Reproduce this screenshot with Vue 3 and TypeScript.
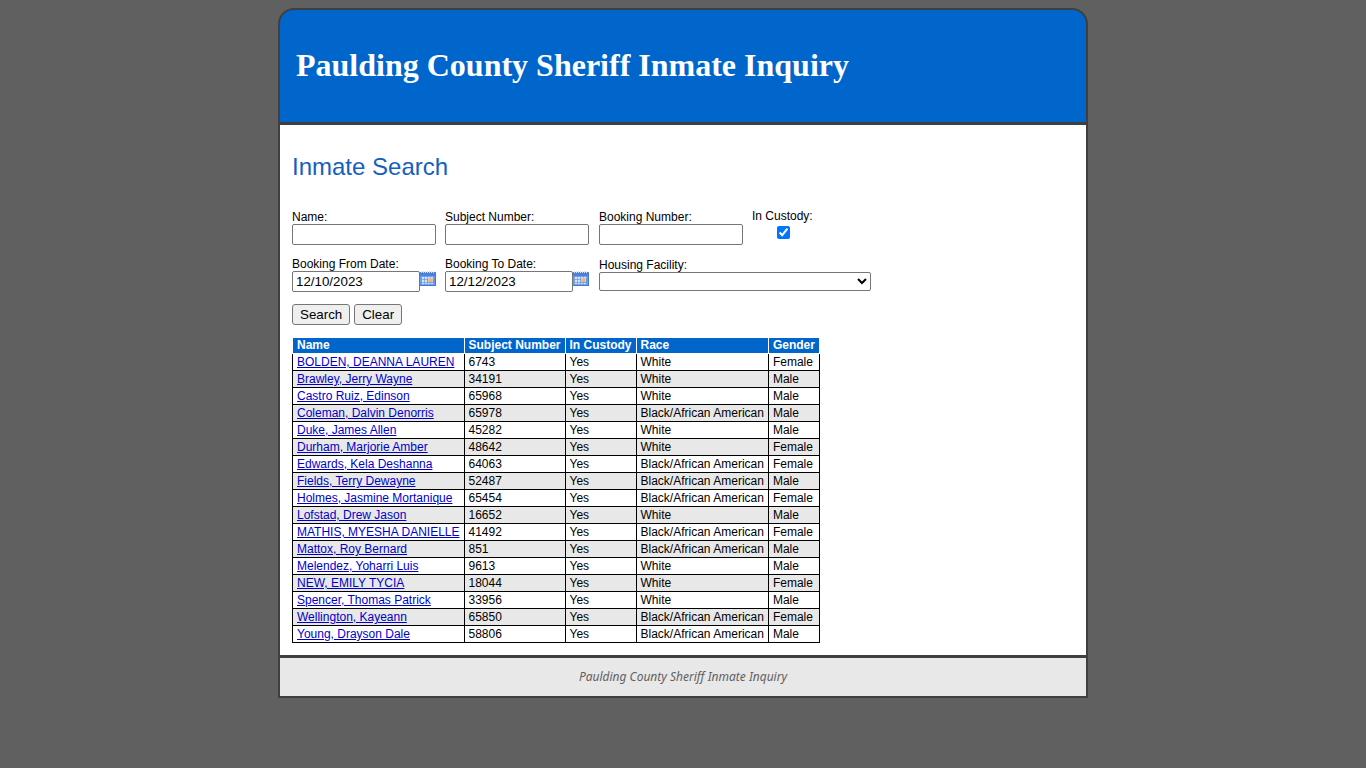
<script setup lang="ts">
import { ref } from 'vue'

interface Inmate {
  name: string
  subject: string
  race: string
  gender: string
}

const title = 'Paulding County Sheriff Inmate Inquiry'
const name = ref('')
const subjectNumber = ref('')
const bookingNumber = ref('')
const inCustody = ref(true)
const fromDate = ref('12/10/2023')
const toDate = ref('12/12/2023')
const facility = ref('')

const columns = ['Name', 'Subject Number', 'In Custody', 'Race', 'Gender']
const black = 'Black/African American'

const inmates: Inmate[] = [
  { name: 'BOLDEN, DEANNA LAUREN', subject: '6743', race: 'White', gender: 'Female' },
  { name: 'Brawley, Jerry Wayne', subject: '34191', race: 'White', gender: 'Male' },
  { name: 'Castro Ruiz, Edinson', subject: '65968', race: 'White', gender: 'Male' },
  { name: 'Coleman, Dalvin Denorris', subject: '65978', race: black, gender: 'Male' },
  { name: 'Duke, James Allen', subject: '45282', race: 'White', gender: 'Male' },
  { name: 'Durham, Marjorie Amber', subject: '48642', race: 'White', gender: 'Female' },
  { name: 'Edwards, Kela Deshanna', subject: '64063', race: black, gender: 'Female' },
  { name: 'Fields, Terry Dewayne', subject: '52487', race: black, gender: 'Male' },
  { name: 'Holmes, Jasmine Mortanique', subject: '65454', race: black, gender: 'Female' },
  { name: 'Lofstad, Drew Jason', subject: '16652', race: 'White', gender: 'Male' },
  { name: 'MATHIS, MYESHA DANIELLE', subject: '41492', race: black, gender: 'Female' },
  { name: 'Mattox, Roy Bernard', subject: '851', race: black, gender: 'Male' },
  { name: 'Melendez, Yoharri Luis', subject: '9613', race: 'White', gender: 'Male' },
  { name: 'NEW, EMILY TYCIA', subject: '18044', race: 'White', gender: 'Female' },
  { name: 'Spencer, Thomas Patrick', subject: '33956', race: 'White', gender: 'Male' },
  { name: 'Wellington, Kayeann', subject: '65850', race: black, gender: 'Female' },
  { name: 'Young, Drayson Dale', subject: '58806', race: black, gender: 'Male' },
]

function clearForm() {
  name.value = ''
  subjectNumber.value = ''
  bookingNumber.value = ''
  facility.value = ''
}
</script>

<template>
  <svg class="sprites" aria-hidden="true">
    <symbol id="calendar" viewBox="0 0 16 16">
      <rect y="1" width="16" height="14" fill="#6699e6" />
      <rect y="1" width="16" height="4" fill="#4d80dc" />
      <path d="M1.500 0v2M3.500 0v2M5.500 0v2M7.500 0v2M9.500 0v2M11.500 0v2M13.500 0v2" stroke="#d5e2f8" />
      <path d="M2 6h2v2H2zM5 6h2v2H5zM8 6h2v2H8zM11 6h2v2h-2zM2 9h2v2H2zM5 9h2v2H5zM2 12h2v1H2zM5 12h2v1H5zM8 12h2v1H8zM11 12h2v1h-2z" fill="#e8f1ff" stroke="#b4d0f7" stroke-width=".5" />
      <rect x="8" y="7" width="5" height="4" fill="#e8c3a4" />
      <rect x="9" y="8" width="3" height="3" fill="#f6b27c" />
      <path d="M0 14.500h16M15.500 3v12" stroke="#4678ce" />
    </symbol>
  </svg>
  <div class="page">
    <header class="banner">
      <h1>{{ title }}</h1>
    </header>
    <main>
      <h2>Inmate Search</h2>
      <form @submit.prevent>
        <div class="fields">
          <div class="field">
            <label for="name">Name:</label>
            <input id="name" v-model="name" type="text" />
          </div>
          <div class="field">
            <label for="subject">Subject Number:</label>
            <input id="subject" v-model="subjectNumber" type="text" />
          </div>
          <div class="field">
            <label for="booking">Booking Number:</label>
            <input id="booking" v-model="bookingNumber" type="text" />
          </div>
          <div class="field custody">
            <label for="custody">In Custody:</label>
            <input id="custody" v-model="inCustody" type="checkbox" />
          </div>
          <div class="field">
            <label for="from">Booking From Date:</label>
            <div class="date">
              <input id="from" v-model="fromDate" type="text" />
              <button type="button" class="picker" aria-label="Pick booking from date">
                <svg width="16" height="16"><use href="#calendar" /></svg>
              </button>
            </div>
          </div>
          <div class="field">
            <label for="to">Booking To Date:</label>
            <div class="date">
              <input id="to" v-model="toDate" type="text" />
              <button type="button" class="picker" aria-label="Pick booking to date">
                <svg width="16" height="16"><use href="#calendar" /></svg>
              </button>
            </div>
          </div>
          <div class="field facility">
            <label for="facility">Housing Facility:</label>
            <select id="facility" v-model="facility">
              <option value=""></option>
            </select>
          </div>
        </div>
        <div class="actions">
          <button type="submit">Search</button>
          <button type="button" @click="clearForm">Clear</button>
        </div>
      </form>
      <table>
        <thead>
          <tr>
            <th v-for="column in columns" :key="column" scope="col">{{ column }}</th>
          </tr>
        </thead>
        <tbody>
          <tr v-for="inmate in inmates" :key="inmate.subject">
            <td><a href="#">{{ inmate.name }}</a></td>
            <td>{{ inmate.subject }}</td>
            <td>Yes</td>
            <td>{{ inmate.race }}</td>
            <td>{{ inmate.gender }}</td>
          </tr>
        </tbody>
      </table>
    </main>
    <footer>{{ title }}</footer>
  </div>
</template>

<style>
body {
  background: #606060;
}
</style>

<style scoped>
.sprites {
  position: absolute;
  width: 0;
  height: 0;
}
.page {
  box-sizing: border-box;
  max-width: 810px;
  margin: 8px auto;
  overflow: hidden;
  border: 2px solid #3f3f3f;
  border-radius: 16px 16px 0 0;
  background: #3f3f3f;
  color: #000;
  font: 12px/14px "Liberation Sans", Arial, sans-serif;
}
.banner {
  padding: 37px 16px 38px;
  border-bottom: 3px solid #3f3f3f;
  background: #0066cc;
}
h1 {
  margin: 0;
  color: #fff;
  font: bold 32px/37px "Liberation Serif", "Times New Roman", serif;
}
main {
  padding: 28px 12px 12px;
  background: #fff;
}
h2 {
  margin: 0 0 28px;
  color: #1560bd;
  font-size: 24px;
  font-weight: normal;
  line-height: 28px;
}
.fields {
  display: grid;
  grid-template-columns: 153px 154px 153px auto;
  justify-content: start;
  row-gap: 11px;
}
.field {
  display: flex;
  flex-direction: column;
  align-items: flex-start;
  justify-content: flex-end;
  min-height: 36px;
}
.field input[type='text'] {
  box-sizing: border-box;
  width: 144px;
  height: 21px;
  padding: 1px 3px;
  border: 1px solid #767676;
  border-radius: 2px;
  background: #fff;
  color: #000;
  font-family: "Liberation Sans", Arial, sans-serif;
}
.custody {
  align-items: center;
  justify-content: flex-start;
  width: 62px;
}
.custody label {
  align-self: flex-start;
  white-space: nowrap;
}
.custody input {
  width: 13px;
  height: 13px;
  margin: 3px 0 0;
}
.date {
  display: flex;
  align-items: flex-start;
}
.date input[type='text'] {
  width: 128px;
}
.picker {
  display: flex;
  padding: 0;
  border: 0;
  background: none;
}
.facility {
  grid-column: 3 / span 2;
  padding-bottom: 1px;
  min-height: 34px;
}
select {
  width: 272px;
  height: 19px;
  border: 1px solid #767676;
  border-radius: 2px;
  background-color: #fff;
  font-family: "Liberation Sans", Arial, sans-serif;
}
.actions {
  display: flex;
  gap: 4px;
  margin: 12px 0;
}
.actions button {
  height: 21px;
  padding: 0 7px;
  border: 1px solid #767676;
  border-radius: 3px;
  background: #efefef;
  color: #000;
  font-family: "Liberation Sans", Arial, sans-serif;
}
table {
  border-collapse: collapse;
}
th,
td {
  padding: 1px 4px;
  border: 1px solid #000;
  text-align: left;
  white-space: nowrap;
}
th {
  border-color: #fff;
  background: #0066cc;
  color: #fff;
  line-height: 13px;
}
tbody tr:nth-child(even) {
  background: #e8e8e8;
}
a {
  color: #0000cc;
}
footer {
  padding: 12px;
  border-top: 3px solid #3f3f3f;
  background: #e8e8e8;
  color: #606060;
  font: italic 12px/14px "Trebuchet MS", "Noto Sans", sans-serif;
  text-align: center;
}
</style>
